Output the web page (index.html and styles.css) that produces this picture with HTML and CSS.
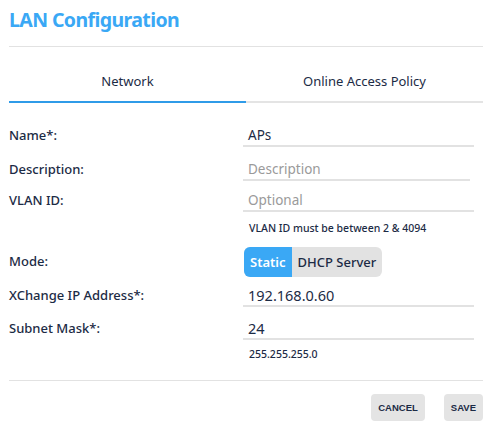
FILE: index.html
```html
<!DOCTYPE html>
<html>
<head>
<meta charset="utf-8">
<link rel="stylesheet" href="styles.css">
</head>
<body>
<div class="dialog">
  <h1 class="title">LAN Configuration</h1>
  <div class="divider"></div>
  <div class="tabs">
    <div class="tab active">Network</div>
    <div class="tab">Online Access Policy</div>
  </div>
  <div class="form">
    <div class="row row-name">
      <div class="label">Name*:</div>
      <div class="input">APs</div>
    </div>
    <div class="row row-desc">
      <div class="label">Description:</div>
      <div class="input input-desc placeholder">Description</div>
    </div>
    <div class="row row-vlan">
      <div class="label">VLAN ID:</div>
      <div class="input placeholder">Optional</div>
    </div>
    <div class="row row-hint1">
      <div></div>
      <div class="hint">VLAN ID must be between 2 &amp; 4094</div>
    </div>
    <div class="row row-mode">
      <div class="label">Mode:</div>
      <div class="toggle">
        <span class="opt on">Static</span><span class="opt">DHCP Server</span>
      </div>
    </div>
    <div class="row row-ip">
      <div class="label">XChange IP Address*:</div>
      <div class="input big">192.168.0.60</div>
    </div>
    <div class="row row-mask">
      <div class="label">Subnet Mask*:</div>
      <div class="input big">24</div>
    </div>
    <div class="row row-hint2">
      <div></div>
      <div class="hint">255.255.255.0</div>
    </div>
  </div>
  <div class="divider divider-bottom"></div>
  <div class="actions">
    <button class="btn">CANCEL</button>
    <button class="btn">SAVE</button>
  </div>
</div>
</body>
</html>
```
FILE: styles.css
```css
html, body {
  margin: 0;
  background: #fff;
}
body {
  font-family: "Noto Sans", sans-serif;
  color: #1c2b45;
}
.dialog {
  padding: 8px 5px 0 9px;
}
.title {
  margin: 0;
  font-size: 19.5px;
  line-height: 24px;
  font-weight: 700;
  color: #3aa8f5;
  letter-spacing: -0.6px;
}
.divider {
  height: 1px;
  background: #e2e2e2;
  margin-top: 14px;
}
.tabs {
  display: flex;
}
.tab {
  flex: 1;
  text-align: center;
  font-size: 13px;
  line-height: 18px;
  padding: 25px 0 11px;
  border-bottom: 2px solid #e4e4e4;
}
.tab.active {
  border-bottom-color: #2f9be8;
}
.row {
  display: grid;
  grid-template-columns: 234px 231px;
  align-items: end;
}
.label {
  font-size: 13px;
  line-height: 18px;
  padding-bottom: 3px;
  font-weight: 500;
}
.input {
  font-size: 13.5px;
  line-height: 18px;
  padding: 0 0 1px 5px;
  border-bottom: 2px solid #e2e2e2;
}
.input.big {
  font-size: 14.5px;
}
.input-desc {
  width: 222px;
}
.placeholder {
  color: #9a9a9a;
}
.hint {
  font-size: 10.5px;
  line-height: 14px;
  padding-left: 6px;
  font-weight: 500;
}
.row-name { margin-top: 23px; }
.row-desc { margin-top: 13px; }
.row-vlan { margin-top: 10px; }
.row-hint1 { margin-top: 9px; }
.row-mode { margin-top: 12px; align-items: center; }
.row-ip { margin-top: 9px; }
.row-mask { margin-top: 12px; }
.row-hint2 { margin-top: 7px; }
.toggle {
  display: flex;
  width: max-content;
  margin-left: 1px;
  height: 30px;
  border-radius: 6px;
  overflow: hidden;
  background: #e2e2e2;
}
.opt {
  display: flex;
  align-items: center;
  padding: 0 6px;
  font-size: 13px;
  font-weight: 500;
}
.opt.on {
  background: #3aa8f5;
  color: #fff;
  font-weight: 600;
}
.divider-bottom {
  margin-top: 19px;
}
.actions {
  display: flex;
  justify-content: flex-end;
  gap: 19px;
  margin-top: 13px;
}
.btn {
  font-family: "Liberation Sans", sans-serif;
  font-size: 9.5px;
  font-weight: 700;
  color: #1c2b45;
  background: #e4e4e4;
  border: none;
  border-radius: 4px;
  height: 27px;
  padding: 0 7px;
}
```
